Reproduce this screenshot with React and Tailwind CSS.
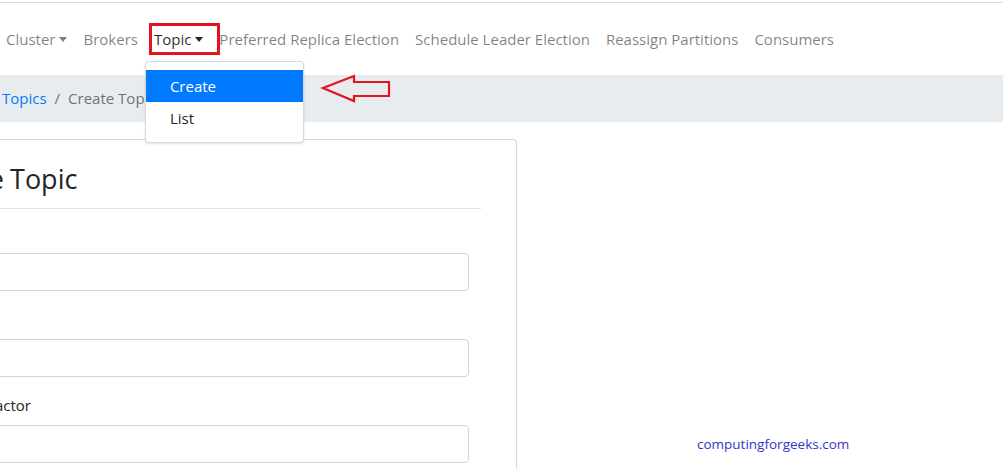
import React from 'react'

const font = { fontFamily: '"Open Sans", "Noto Sans", Arial, sans-serif' }

function Caret() {
    return <span className="ml-[4px] inline-block h-0 w-0 border-x-[4.5px] border-t-[5px] border-x-transparent border-t-current align-[3px]" />
}

function NavItem({ children, caret, className = '' }) {
    return (
        <a className={`relative flex items-center px-2 ${className}`}>
            {children}
            {caret && <Caret />}
        </a>
    )
}

function Field({ label }) {
    return (
        <div className="mb-4">
            <label className="mb-2 block h-6 leading-6 text-[15px] text-[#212529]">{label}</label>
            <div className="h-[38px] w-[563px] rounded border border-[#ced4da] bg-white" />
        </div>
    )
}

export default function App() {
    return (
        <div style={font} className="relative h-[469px] w-[1003px] overflow-hidden bg-white text-[15px]">
            <div className="h-[3px] border-b border-[#dcdcdc]" />

            {/* navbar */}
            <nav className="flex h-[72px] items-center text-black/50">
                <NavItem caret className="-ml-[2px]">Cluster</NavItem>
                <NavItem>Brokers</NavItem>
                <NavItem caret className="text-black/85">
                    Topic
                    <span className="pointer-events-none absolute -top-[5px] left-[3px] h-[32px] w-[71px] border-[3px] border-[#e3131f]" />
                    {/* dropdown */}
                    <div className="absolute left-[-1px] top-[33px] z-10 w-[159px] rounded border border-black/15 bg-white py-2 shadow-sm">
                        <div className="h-8 bg-[#007bff] px-6 leading-8 text-white">Create</div>
                        <div className="h-8 px-6 leading-8 text-[#212529]">List</div>
                    </div>
                </NavItem>
                <NavItem>Preferred Replica Election</NavItem>
                <NavItem>Schedule Leader Election</NavItem>
                <NavItem>Reassign Partitions</NavItem>
                <NavItem>Consumers</NavItem>
            </nav>

            {/* breadcrumb */}
            <div className="flex h-[47px] items-center bg-[#e9ecef] pl-[2px]">
                <span className="text-[#007bff]">Topics</span>
                <span className="px-2 text-[#6c757d]">/</span>
                <span className="text-[#6c757d]">Create Topic</span>
            </div>

            {/* red arrow annotation */}
            <svg className="absolute left-[320px] top-[73px]" width="74" height="30" viewBox="0 0 74 30">
                <path d="M3 15 L34 3 L34 9 L69 9 L69 23 L34 23 L34 28 Z" fill="none" stroke="#e3131f" strokeWidth="2.2" strokeLinejoin="miter" />
            </svg>

            {/* card */}
            <div className="ml-[-115px] mt-[17px] w-[632px] rounded border border-black/15 bg-white px-5 pt-[22px]">
                <h3 className="h-[34px] pl-[15px] text-[27px] font-medium leading-[34px] text-[#212529] [word-spacing:-1px]">Create Topic</h3>
                <div className="mt-[12px] mb-[12px] w-[575px] border-t border-[#dee2e6]" />
                <Field label="Name" />
                <Field label="Partitions" />
                <Field label="Replication Factor" />
            </div>

            <div className="absolute left-[697px] top-[434px] text-[13.5px] text-[#3434c8]">computingforgeeks.com</div>
        </div>
    )
}
